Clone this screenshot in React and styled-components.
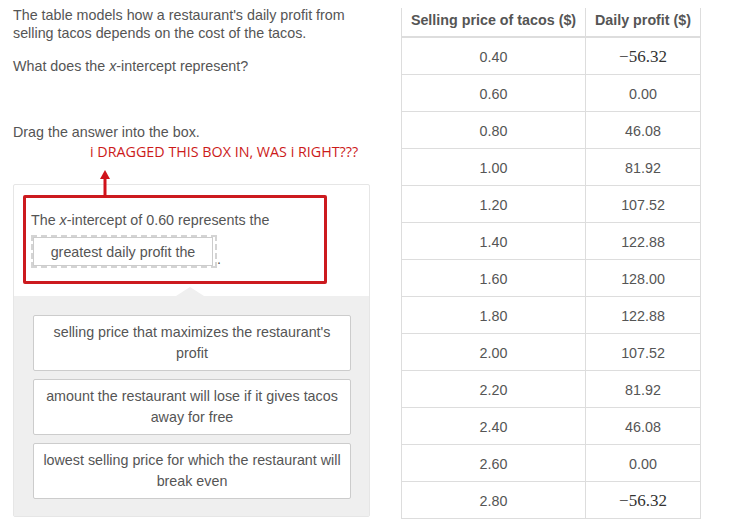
import React from "react";
import styled, { createGlobalStyle } from "styled-components";

const Global = createGlobalStyle`
  body {
    margin: 0;
    background: #fff;
    font-family: "Liberation Sans", Arial, sans-serif;
    color: #555;
  }
`;

const Page = styled.div`
  display: flex;
  align-items: flex-start;
  width: 741px;
  height: 527px;
  overflow: hidden;
`;

const Left = styled.div`
  width: 357px;
  margin-left: 13px;
  padding-top: 6px;
  font-size: 14.3px;
  line-height: 18px;
`;

const Para = styled.p`
  margin: 0 0 ${(p) => p.gap || 15}px;
`;

const Note = styled.div`
  font-family: "Open Sans", sans-serif;
  font-size: 14.3px;
  line-height: 18px;
  color: #cc1a1a;
  margin: 0 0 23px 77px;
  white-space: nowrap;
`;

const Panel = styled.div`
  position: relative;
  border: 1px solid #e6e6e6;
  border-radius: 2px;
  width: 355px;
`;

const Top = styled.div`
  position: relative;
  height: 111px;
  padding: 26px 17px 0;
  box-sizing: border-box;
  &::after {
    content: "";
    position: absolute;
    left: 162px;
    bottom: 0;
    border-left: 14px solid transparent;
    border-right: 14px solid transparent;
    border-bottom: 9px solid #efefef;
  }
`;

const Sentence = styled.div`
  line-height: 18px;
`;

const DropZone = styled.span`
  display: inline-flex;
  margin-top: 6px;
  border: 2px dashed #d4d4d4;
  vertical-align: bottom;
`;

const Dropped = styled.span`
  display: inline-block;
  width: 180px;
  height: 29px;
  line-height: 29px;
  text-align: center;
  border: 1px solid #ccc;
  background: #fff;
  box-sizing: border-box;
  margin-right: 2px;
`;

const Bottom = styled.div`
  background: #efefef;
  padding: 19px 19px 17px;
  display: flex;
  flex-direction: column;
  gap: 8px;
`;

const Choice = styled.div`
  width: 318px;
  height: 56px;
  box-sizing: border-box;
  background: #fff;
  border: 1px solid #ccc;
  border-radius: 2px;
  display: flex;
  align-items: center;
  justify-content: center;
  text-align: center;
  padding: 0 5px;
  line-height: 21px;
`;

const Highlight = styled.div`
  position: absolute;
  left: 9px;
  top: 10px;
  width: 304px;
  height: 89px;
  box-sizing: border-box;
  border: 3px solid #cc1a1f;
  border-radius: 2px;
  pointer-events: none;
`;

const Arrow = styled.svg`
  position: absolute;
  left: 85px;
  top: -16px;
  overflow: visible;
`;

const Table = styled.table`
  margin: 8px 0 0 31px;
  border-collapse: collapse;
  font-size: 14.3px;
  color: #555;
`;

const Th = styled.th`
  height: 29px;
  padding: 0 6px 4px;
  font-weight: bold;
  text-align: center;
  white-space: nowrap;
  border-left: 1px solid #ddd;
  border-right: 1px solid #ddd;
  border-bottom: 2px solid #ddd;
  width: ${(p) => p.w}px;
  box-sizing: border-box;
`;

const Td = styled.td`
  height: 35px;
  padding: 1px 0 0;
  text-align: center;
  border: 1px solid #ddd;
  border-top: none;
`;

const Neg = styled.span`
  font-family: "Liberation Serif", "DejaVu Serif", serif;
  font-size: 17px;
  color: #333;
`;

const rows = [
  ["0.40", "-56.32"],
  ["0.60", "0.00"],
  ["0.80", "46.08"],
  ["1.00", "81.92"],
  ["1.20", "107.52"],
  ["1.40", "122.88"],
  ["1.60", "128.00"],
  ["1.80", "122.88"],
  ["2.00", "107.52"],
  ["2.20", "81.92"],
  ["2.40", "46.08"],
  ["2.60", "0.00"],
  ["2.80", "-56.32"],
];

export default function App() {
  return (
    <Page>
      <Global />
      <Left>
        <Para>
          The table models how a restaurant's daily profit from selling tacos
          depends on the cost of the tacos.
        </Para>
        <Para gap={48}>
          What does the <i>x</i>-intercept represent?
        </Para>
        <Para gap={2}>Drag the answer into the box.</Para>
        <Note>i DRAGGED THIS BOX IN, WAS i RIGHT???</Note>
        <Panel>
          <Top>
            <Sentence>
              The <i>x</i>-intercept of 0.60 represents the
              <br />
              <DropZone>
                <Dropped>greatest daily profit the</Dropped>
              </DropZone>
              .
            </Sentence>
          </Top>
          <Bottom>
            <Choice>selling price that maximizes the restaurant's profit</Choice>
            <Choice>amount the restaurant will lose if it gives tacos away for free</Choice>
            <Choice>lowest selling price for which the restaurant will break even</Choice>
          </Bottom>
          <Highlight />
          <Arrow width="12" height="30" viewBox="0 0 12 30">
            <path d="M6 8 L6 28" stroke="#d0121a" strokeWidth="3" />
            <path d="M1 10 L6 1 L11 10 Z" fill="#d0121a" />
          </Arrow>
        </Panel>
      </Left>
      <Table>
        <thead>
          <tr>
            <Th w={184}>Selling price of tacos ($)</Th>
            <Th w={115}>Daily profit ($)</Th>
          </tr>
        </thead>
        <tbody>
          {rows.map(([a, b]) => (
            <tr key={a}>
              <Td>{a}</Td>
              <Td>{b.startsWith("-") ? <Neg>−{b.slice(1)}</Neg> : b}</Td>
            </tr>
          ))}
        </tbody>
      </Table>
    </Page>
  );
}
